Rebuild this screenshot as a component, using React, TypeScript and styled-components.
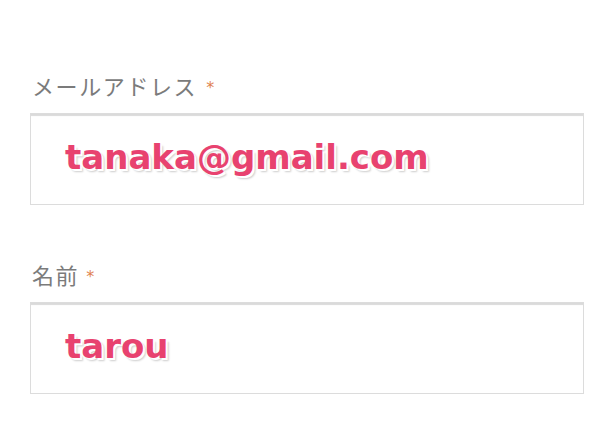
import styled, { createGlobalStyle } from "styled-components";

const GlobalStyle = createGlobalStyle`
  html, body {
    margin: 0;
    padding: 0;
    background: #ffffff;
  }
`;

const Page = styled.div`
  width: 614px;
  height: 444px;
  box-sizing: border-box;
  padding: 70px 30px 0 30px;
  display: flex;
  flex-direction: column;
  gap: 54px;
  font-family: "Noto Sans CJK JP", "Noto Sans", sans-serif;
`;

const Field = styled.div`
  display: flex;
  flex-direction: column;
  gap: 13px;
`;

const Label = styled.div`
  display: flex;
  align-items: center;
  padding-left: 2px;
  height: 30px;
  font-size: 22px;
  line-height: 30px;
  letter-spacing: 1.6px;
  color: #7b7b7b;
`;

const Required = styled.span`
  margin-left: ${(props: { $gap: number }) => props.$gap}px;
  margin-top: 6px;
  font-family: "DejaVu Sans", sans-serif;
  font-size: 16px;
  color: #e0814f;
`;

const InputBox = styled.div`
  box-sizing: border-box;
  width: 554px;
  height: 92px;
  border: 1px solid #dcdcdc;
  box-shadow: inset 0 3px 1px -1px #dadada;
  padding: 23px 0 0 34px;
`;

const Value = styled.span`
  font-family: "DejaVu Sans", "Noto Sans", sans-serif;
  font-weight: bold;
  font-size: 34px;
  line-height: 40px;
  color: #e8426f;
  text-shadow: 2px 2px 0 #ffffff, 3px 3px 2px rgba(0, 0, 0, 0.2);
`;

const App = () => {
  return (
    <>
      <GlobalStyle />
      <Page>
        <Field>
          <Label>
            メールアドレス
            <Required $gap={9}>*</Required>
          </Label>
          <InputBox>
            <Value>tanaka@gmail.com</Value>
          </InputBox>
        </Field>
        <Field>
          <Label>
            名前
            <Required $gap={7}>*</Required>
          </Label>
          <InputBox>
            <Value>tarou</Value>
          </InputBox>
        </Field>
      </Page>
    </>
  );
};

export default App;
